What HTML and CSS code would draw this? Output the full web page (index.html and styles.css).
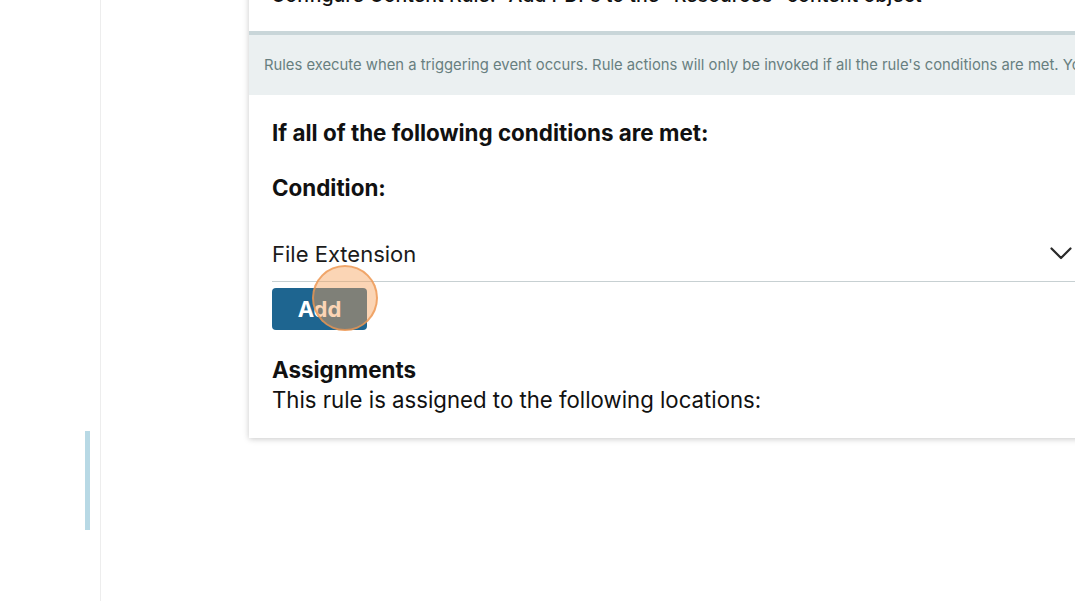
FILE: index.html
```html
<!DOCTYPE html>
<html lang="en">
<head>
<meta charset="utf-8">
<title>Configure Content Rule</title>
<link rel="stylesheet" href="styles.css">
</head>
<body>
<div class="page">
  <aside class="sidebar">
    <div class="indicator"></div>
  </aside>
  <main class="main">
    <section class="card">
      <header class="card-head">
        <h1 class="title">Configure Content Rule: “Add PDFs to the “Resources” content object</h1>
      </header>
      <div class="info">Rules execute when a triggering event occurs. Rule actions will only be invoked if all the rule's conditions are met. You can add new actions and conditions using the buttons below.</div>
      <div class="card-body">
        <h2 class="heading first">If all of the following conditions are met:</h2>
        <h2 class="heading">Condition:</h2>
        <div class="select">
          <span class="select-value">File Extension</span>
          <svg class="chev" width="22" height="13" viewBox="0 0 22 13"><path d="M1.5 1.5 L11 11 L20.5 1.5" fill="none" stroke="#2a2a2a" stroke-width="2.2" stroke-linecap="round" stroke-linejoin="round"/></svg>
        </div>
        <div class="btn-wrap">
          <button class="btn">Add</button>
          <span class="click-mark"></span>
        </div>
        <h2 class="heading assign">Assignments</h2>
        <p class="assign-text">This rule is assigned to the following locations:</p>
      </div>
    </section>
  </main>
</div>
</body>
</html>
```

FILE: styles.css
```css
html, body {
  margin: 0;
  padding: 0;
  background: #ffffff;
  overflow: hidden;
  height: 601px;
}
body {
  font-family: "Inter", "Liberation Sans", sans-serif;
  color: #111;
}
.page {
  display: flex;
  height: 601px;
}
.sidebar {
  width: 100px;
  flex: 0 0 100px;
  border-right: 1px solid #ededed;
  box-sizing: content-box;
  padding-top: 431px;
}
.indicator {
  margin-left: 85px;
  width: 5px;
  height: 99px;
  background: #b8d9e5;
}
.main {
  flex: 1;
  padding-left: 148px;
  overflow: hidden;
}
.card {
  width: 850px;
  margin-top: -20px;
  background: #fff;
  box-shadow: 0 1px 6px rgba(0,0,0,0.22);
}
.card-head {
  padding: 0 22px;
  border-bottom: 4px solid #c9d6d9;
}
.title {
  margin: 0;
  font-size: 19.6px;
  font-weight: 500;
  line-height: 30px;
  padding-bottom: 21px;
  white-space: nowrap;
}
.info {
  background: #ebf0f1;
  height: 60px;
  line-height: 60px;
  padding-left: 15px;
  font-size: 14.8px;
  color: #687f80;
  white-space: nowrap;
  overflow: hidden;
}
.card-body {
  padding: 0 22px 25px 23px;
}
.heading {
  margin: 0;
  font-size: 22.4px;
  font-weight: 700;
  line-height: 26px;
}
.heading.first {
  padding-top: 25px;
}
.heading + .heading {
  margin-top: 29px;
}
.select {
  margin-top: 30px;
  display: flex;
  align-items: center;
  justify-content: space-between;
  padding: 10px 0 14px;
  border-bottom: 1px solid #c7d0d2;
  font-size: 22px;
  line-height: 26px;
}
.select-value {
  font-weight: 400;
  color: #1b1b1b;
}
.chev {
  margin-right: 5px;
  margin-top: -2px;
}
.btn-wrap {
  position: relative;
  margin-top: 6px;
  height: 42px;
}
.btn {
  width: 95px;
  height: 42px;
  border: none;
  border-radius: 4px;
  background: #1e6590;
  color: #fff;
  font-family: inherit;
  font-size: 22px;
  font-weight: 700;
  padding: 0;
}
.click-mark {
  position: absolute;
  left: 40px;
  top: -23px;
  width: 62px;
  height: 62px;
  border-radius: 50%;
  background: rgba(246, 162, 92, 0.45);
  border: 2px solid rgba(236, 150, 80, 0.75);
}
.heading.assign {
  margin-top: 27px;
}
.assign-text {
  margin: 4px 0 0;
  font-size: 22.2px;
  line-height: 26px;
  font-weight: 400;
}
```
